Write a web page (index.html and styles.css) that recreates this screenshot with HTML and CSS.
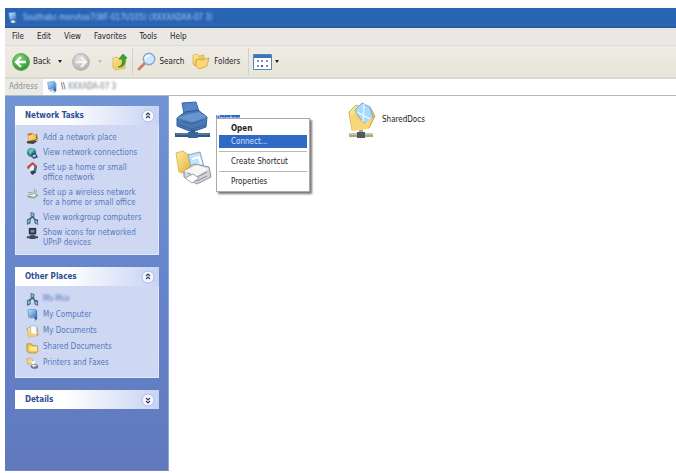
FILE: index.html
```html
<!DOCTYPE html>
<html lang="en">
<head>
<meta charset="utf-8">
<title>Network printers</title>
<link rel="stylesheet" href="styles.css">
</head>
<body>
<svg class="defs" aria-hidden="true">
  <defs>
    <linearGradient id="gold" x1="0" y1="0" x2="1" y2="1"><stop offset="0" stop-color="#fff0a0"/><stop offset="1" stop-color="#e3a82c"/></linearGradient>
    <linearGradient id="screen" x1="0" y1="0" x2="1" y2="1"><stop offset="0" stop-color="#d0efff"/><stop offset="1" stop-color="#2c78cc"/></linearGradient>
    <radialGradient id="green" cx=".4" cy=".3" r=".8"><stop offset="0" stop-color="#8ddb7c"/><stop offset="1" stop-color="#1e8a22"/></radialGradient>
    <radialGradient id="grey" cx=".4" cy=".3" r=".8"><stop offset="0" stop-color="#e4e4e2"/><stop offset="1" stop-color="#a9aaab"/></radialGradient>
    <symbol id="computer" viewBox="0 0 14 14"><path d="M2 1l8-1 1 8-8 1z" fill="url(#screen)" stroke="#5482ba" stroke-width=".7"/><path d="M11 1l1 1v9l-3 2-1-4 3-1z" fill="#3768ae"/><path d="M5 9h3l1 2-5 1z" fill="#92a7c2"/><path d="M4 11l5-1 1 2-4 1z" fill="#dce5ee"/></symbol>
    <symbol id="workgroup" viewBox="0 0 14 14"><path d="M5 0l4 1v6L5 6zM1 8l4-2v6l-4 2zM9 7l4 1v6l-4-2z" fill="#3e6d94"/><path d="M6 1l2 1v3L6 5zM2 9l2-1v3l-2 1zM10 9l2 1v3l-2-2z" fill="#90bec9"/><path d="M4 8l3-3 3 4" fill="none" stroke="#4b5c70" stroke-width="1.4"/></symbol>
    <symbol id="up" viewBox="0 0 14 14"><circle cx="7" cy="7" r="6" fill="#f5f7ff" stroke="#aebce3"/><path d="M5 6l2-2 2 2M5 9l2-2 2 2" fill="none" stroke="#303c70" stroke-width="1.1"/></symbol>
  </defs>
</svg>
<div class="window">
  <header class="titlebar">
    <svg class="title-icon"><use href="#computer"/></svg>
    <span class="title-text">Southabc-mervtoa7(WF-017U105) (XXXXADAX-07 3)</span>
  </header>
  <nav class="menubar">
    <button>File</button><button>Edit</button><button>View</button><button>Favorites</button><button>Tools</button><button>Help</button>
  </nav>
  <div class="toolbar">
    <button class="tool back"><svg width="18" height="18" viewBox="0 0 18 18"><circle cx="9" cy="9" r="8.4" fill="url(#green)" stroke="#55a84e"/><path d="M9 4L4 9l5 5M5 9h9" fill="none" stroke="#fff" stroke-width="2.3"/></svg>Back<span class="caret"></span></button>
    <button class="tool forward" aria-label="Forward"><svg width="18" height="18" viewBox="0 0 18 18"><circle cx="9" cy="9" r="8.4" fill="url(#grey)" stroke="#b3b3b2"/><path d="M9 4l5 5-5 5M13 9H4" fill="none" stroke="#f5f5f3" stroke-width="2.3"/></svg><span class="caret faint"></span></button>
    <button class="tool" aria-label="Up"><svg width="16" height="18" viewBox="0 0 16 18"><path d="M1 5l4-1 2 2 6-1v10l-9 2-3-2z" fill="url(#gold)" stroke="#d1a948" stroke-width=".7"/><path d="M4 17l3-9 8-2-3 9z" fill="#f5d367"/><path d="M6 14c4-1 5-4 4-8H7l4-5 4 4-2 1c1 5-2 9-7 8z" fill="#37a638" stroke="#238127" stroke-width=".6"/></svg></button>
    <span class="divider"></span>
    <button class="tool search"><svg width="19" height="19" viewBox="0 0 19 19"><path d="M8 11l-6 6" stroke="#c98367" stroke-width="3" stroke-linecap="round"/><circle cx="12" cy="7" r="5.7" fill="#cceaff" stroke="#84a9cf" stroke-width="1.4"/><path d="M8 7q1-4 5-3" fill="none" stroke="#fff" stroke-width="1.5"/></svg>Search</button>
    <button class="tool folders"><svg width="18" height="17" viewBox="0 0 18 17"><path d="M1 2l4-1 2 2 5-1v8l-9 3-2-2z" fill="url(#gold)" stroke="#d8ad45" stroke-width=".7"/><path d="M4 7l4-1 2 1 7-2-2 8-8 3-3-3z" fill="#f9d875" stroke="#d2a137" stroke-width=".8"/></svg>Folders</button>
    <span class="divider"></span>
    <button class="tool views" aria-label="Views"><svg width="19" height="16" viewBox="0 0 19 16"><path d="M.5.5h18v15H.5z" fill="#fff" stroke="#5583b5"/><path d="M1 1h17v3H1z" fill="#3b74b7"/><path d="M4 6h2v2H4zm9 0h2v2h-2zM4 11h2v2H4z" fill="#6e9bb7"/><path d="M8 6h2v2H8zm5 5h2v2h-2z" fill="#a67a91"/><path d="M8 11h2v2H8z" fill="#416286"/></svg><span class="caret"></span></button>
  </div>
  <div class="addressbar">
    <label for="address">Address</label>
    <div class="address-box"><svg class="small-icon"><use href="#computer"/></svg><input id="address" value="\\"><span class="address-host">XXXADA-07 3</span></div>
  </div>
  <div class="content">
    <aside class="sidebar">
      <section class="panel">
        <h2>Network Tasks<button aria-label="Collapse Network Tasks"><svg width="14" height="14"><use href="#up"/></svg></button></h2>
        <ul>
          <li><svg viewBox="0 0 14 14"><path d="M2 2l5-1 1 2 4-1v8l-9 2z" fill="url(#gold)" stroke="#c89032" stroke-width=".6"/><path d="M2 2l4-1 1 2-5 1z" fill="#df6a32"/><path d="M1 10l7-1 4 1-4 3-7-1z" fill="#4b443f"/><path d="M11 3l1 4-4 3" fill="none" stroke="#5a5142"/></svg><a href="#">Add a network place</a></li>
          <li><svg viewBox="0 0 14 14"><circle cx="6" cy="6" r="5" fill="#30869b"/><path d="M2 4q5-5 7-1L6 6 5 9z" fill="#72c69b"/><path d="M5 8l5-2 3 5-5 2z" fill="#244b77"/><path d="M7 9l3-1 1 2-3 1z" fill="#b8dce6"/></svg><a href="#">View network connections</a></li>
          <li><svg viewBox="0 0 14 14"><path d="M3 5l4-4 5 4v3l-4 3-3-3z" fill="#eef2f8"/><path d="M1 5l6-5 5 4-1 2-4-3-5 5z" fill="#c84a3b"/><path d="M9 4l3 1-1 5-3 1z" fill="#526886"/><path d="M5 10l4-1 2 2-4 3-2-2z" fill="#354054"/></svg><a href="#">Set up a home or small<br>office network</a></li>
          <li><svg viewBox="0 0 14 14"><path d="M2 9l7-2 4 2-4 3-7-1z" fill="#f2f7ed" stroke="#648779" stroke-width=".7"/><path d="M9 7V2M11 3v4M2 6h5" stroke="#8ca99b"/><path d="M3 10l5 1 4-2" fill="none" stroke="#629965"/></svg><a href="#">Set up a wireless network<br>for a home or small office</a></li>
          <li><svg><use href="#workgroup"/></svg><a href="#">View workgroup computers</a></li>
          <li><svg viewBox="0 0 14 14"><path d="M3 1h8v7H3z" fill="#29354b"/><path d="M5 3h4v3H5z" fill="#7a8ba6"/><path d="M6 8h2v2H6zM1 10h12v2H1zM4 9h6v4H4z" fill="#3f4859"/></svg><a href="#">Show icons for networked<br>UPnP devices</a></li>
        </ul>
      </section>
      <section class="panel places">
        <h2>Other Places<button aria-label="Collapse Other Places"><svg width="14" height="14"><use href="#up"/></svg></button></h2>
        <ul>
          <li><svg><use href="#workgroup"/></svg><a class="obscured" href="#">Ms-Msx</a></li>
          <li><svg><use href="#computer"/></svg><a href="#">My Computer</a></li>
          <li><svg viewBox="0 0 14 14"><path d="M1 4l4-2 7 1 1 8-10 2z" fill="url(#gold)" stroke="#a98a3d" stroke-width=".7"/><path d="M5 1h6l1 9H5z" fill="#f9fbff" stroke="#9cadc1" stroke-width=".6"/><path d="M1 6l3 3 8 1-1 2-8 1z" fill="#f1d173"/></svg><a href="#">My Documents</a></li>
          <li><svg viewBox="0 0 14 14"><path d="M1 3h5l1 2h5l1 6-2 2H3l-2-2z" fill="#f3bd3f" stroke="#aa8435" stroke-width=".7"/><path d="M3 6h9v5H4z" fill="#ffe88c"/></svg><a href="#">Shared Documents</a></li>
          <li><svg viewBox="0 0 14 14"><path d="M1 2l4-1 2 2v4L2 8z" fill="#f3d78d" stroke="#b88a68" stroke-width=".6"/><path d="M6 5l3-1 1 4-3 1z" fill="#fff"/><path d="M5 9l5-2 3 2v3l-5 1-3-2z" fill="#707986"/><path d="M6 9l4-1 2 1-4 2z" fill="#e4e9f0"/></svg><a href="#">Printers and Faxes</a></li>
        </ul>
      </section>
      <section class="panel">
        <h2>Details<button aria-label="Expand Details"><svg class="flip" width="14" height="14"><use href="#up"/></svg></button></h2>
      </section>
    </aside>
    <main class="files">
      <div class="file selected"><svg width="36" height="38" viewBox="0 0 36 38"><path d="M7 2l14-1 4 13-15 4z" fill="#5686c9" stroke="#37679f"/><path d="M2 17l8-6 13-2 9 7-1 10-14 5L2 25z" fill="#4a78b5" stroke="#305c94"/><path d="M2 17l16 4 14-5-8-5-14 3z" fill="#6996d1"/><path d="M7 20l9 3 12-4M4 24l13 4 13-4" fill="none" stroke="#3c689f" stroke-width="1.2"/><path d="M18 29v5M0 34h35" stroke="#315782" stroke-width="4"/><path d="M1 33h12m9 0h12" stroke="#779cbd"/><path d="M13 31h10v6H13z" fill="#386597"/></svg><span>Printer</span>
        <div class="context-menu" role="menu">
          <button class="default" role="menuitem">Open</button>
          <button class="active" role="menuitem">Connect...</button>
          <hr>
          <button role="menuitem">Create Shortcut</button>
          <hr>
          <button role="menuitem">Properties</button>
        </div>
      </div>
      <div class="file shared"><svg width="30" height="38" viewBox="0 0 30 38"><path d="M2 11l7-7 8 3 6-1 5 9-6 12-17 2z" fill="url(#gold)" stroke="#d5ab48"/><path d="M8 9l7-7 8 4 3 11-7 6-8-8z" fill="#a6d9fb" stroke="#76a9d7"/><path d="M17 3l-1 18M10 11l13 7" stroke="#e2f4ff" stroke-width="1.5"/><path d="M3 14l14 9 9-7-5 12-16 2z" fill="#f9d778"/><path d="M14 29v5M2 34h24" stroke="#a3a88d" stroke-width="4"/><path d="M2 33h24" stroke="#eee7ae"/><path d="M10 31h8v6h-8z" fill="#53585a"/></svg><span>SharedDocs</span></div>
      <div class="file printers"><svg width="37" height="35" viewBox="0 0 37 35"><path d="M1 3l7-2 4 3 5 1v20L4 22z" fill="url(#gold)" stroke="#deb65a"/><path d="M13 5l12-3 4 15-12 3z" fill="#bfe5fc" stroke="#82a8c6"/><path d="M17 9l7-2 2 7" fill="none" stroke="#fff" stroke-width="2"/><path d="M9 21l10-7 15 3 2 10-14 7-13-7z" fill="#d1d4da" stroke="#8e949b"/><path d="M9 21l13 5 12-7-12-4z" fill="#f6f6f5"/><path d="M13 23l9 4 10-5M12 27l10 4 10-5" fill="none" stroke="#858b92"/><path d="M10 28l8-4 6 4-7 5z" fill="#fff" stroke="#a5a9ad"/></svg></div>
    </main>
  </div>
</div>
</body>
</html>
```
FILE: styles.css
```css
* { box-sizing: border-box; }
body {
  margin: 0;
  padding: 8px 0 2px 5px;
  min-height: 100vh;
  display: flex;
  background: #fff;
  font: 8px/10px "DejaVu Sans Condensed", "DejaVu Sans", sans-serif;
  color: #222;
}
button, input { font: inherit; color: inherit; border: 0; padding: 0; background: none; }
svg { flex: none; }
.defs { position: absolute; width: 0; height: 0; }
.window { flex: 1; min-width: 0; display: flex; flex-direction: column; }
.titlebar {
  height: 20px;
  display: flex;
  align-items: center;
  gap: 4px;
  padding: 0 2px;
  background: linear-gradient(#2866b5, #2862b3 70%, #2e6ab8 85%, #265593);
  color: #a9cdf5;
}
.title-icon { width: 12px; height: 12px; }
.title-text { filter: blur(1px); white-space: nowrap; }
.menubar {
  height: 18px;
  display: flex;
  align-items: center;
  gap: 13px;
  padding: 0 7px;
  background: #eae8e5;
  border-bottom: 1px solid #dddbd3;
}
.toolbar {
  height: 33px;
  display: flex;
  align-items: center;
  padding: 0 7px;
  background: linear-gradient(#eeece5, #e8e5d9);
  border-bottom: 2px solid #d7d8d4;
}
.tool { display: flex; align-items: center; gap: 3px; }
.back { margin-right: 10px; }
.forward { margin-right: 10px; gap: 8px; }
.search { margin-right: 8px; }
.folders { gap: 4px; margin-right: 4px; }
.caret { border: 2px solid transparent; border-top: 3px solid #222; border-bottom: 0; margin-left: 5px; }
.views .caret { margin-left: 0; }
.caret.faint { border-top-color: #bbb; margin-left: 0; }
.divider { width: 1px; height: 27px; background: #d2d0ca; margin: 0 4px; }
.addressbar {
  height: 17px;
  display: flex;
  align-items: center;
  gap: 5px;
  padding-left: 4px;
  background: #eceae5;
  color: #8e8e8c;
  border-bottom: 1px solid #a9bbc8;
}
.address-box { flex: 1; height: 16px; display: flex; align-items: center; padding-left: 3px; background: #fff; color: #333; }
.address-box input { width: 7px; margin-left: 3px; outline: 0; }
.address-host { filter: blur(1px); color: #777; }
.small-icon { width: 12px; height: 13px; }
.content { flex: 1; display: flex; }
.sidebar {
  width: 164px;
  padding: 10px 9px 10px 10px;
  display: flex;
  flex-direction: column;
  gap: 12px;
  background: linear-gradient(#7094d4, #6684cb 50%, #6079bd);
  border-right: 1px solid #8da5d8;
  border-bottom: 1px solid #7089c2;
}
.panel h2 {
  height: 19px;
  margin: 0;
  padding: 0 4px 0 10px;
  display: flex;
  align-items: center;
  justify-content: space-between;
  background: linear-gradient(90deg, #fff 35%, #c7d3f4);
  color: #2b4c91;
  font-size: 8px;
  font-weight: bold;
}
.panel h2 button { display: flex; }
.flip { transform: rotate(180deg); }
.panel ul {
  margin: 0;
  padding: 8px 4px 6px 10px;
  list-style: none;
  display: flex;
  flex-direction: column;
  gap: 5px;
  background: #cfd8f3;
  border: 1px solid #e2e8f8;
  border-top: 0;
}
.places ul { gap: 6px; padding-bottom: 9px; }
.panel li { display: flex; gap: 4px; min-height: 10px; white-space: nowrap; }
.panel li svg { width: 13px; height: 13px; margin: -1px 0 -2px; }
.panel a { color: #5578bd; text-decoration: none; }
.panel .obscured { filter: blur(1px); }
.files {
  flex: 1;
  display: grid;
  grid-template-columns: 172px 1fr;
  align-content: start;
  row-gap: 10px;
  padding: 5px 6px;
  background: #fff;
}
.file { position: relative; display: flex; align-items: center; gap: 5px; height: 38px; }
.selected span { background: #316ac5; color: #dbe9ff; }
.printers { height: 36px; }
.context-menu {
  position: absolute;
  z-index: 1;
  left: 41px;
  top: 17px;
  width: 94px;
  padding: 3px 2px;
  display: flex;
  flex-direction: column;
  background: #fff;
  border: 1px solid #aaa9a4;
  box-shadow: 2px 2px 2px #777;
}
.context-menu button { height: 13px; padding: 0 0 0 12px; text-align: left; white-space: nowrap; }
.context-menu .default { font-weight: bold; }
.context-menu .active { background: #316ac5; color: #cfe2ff; }
.context-menu hr { width: 100%; height: 1px; margin: 3px 0; border: 0; background: #bbbab5; }
```
